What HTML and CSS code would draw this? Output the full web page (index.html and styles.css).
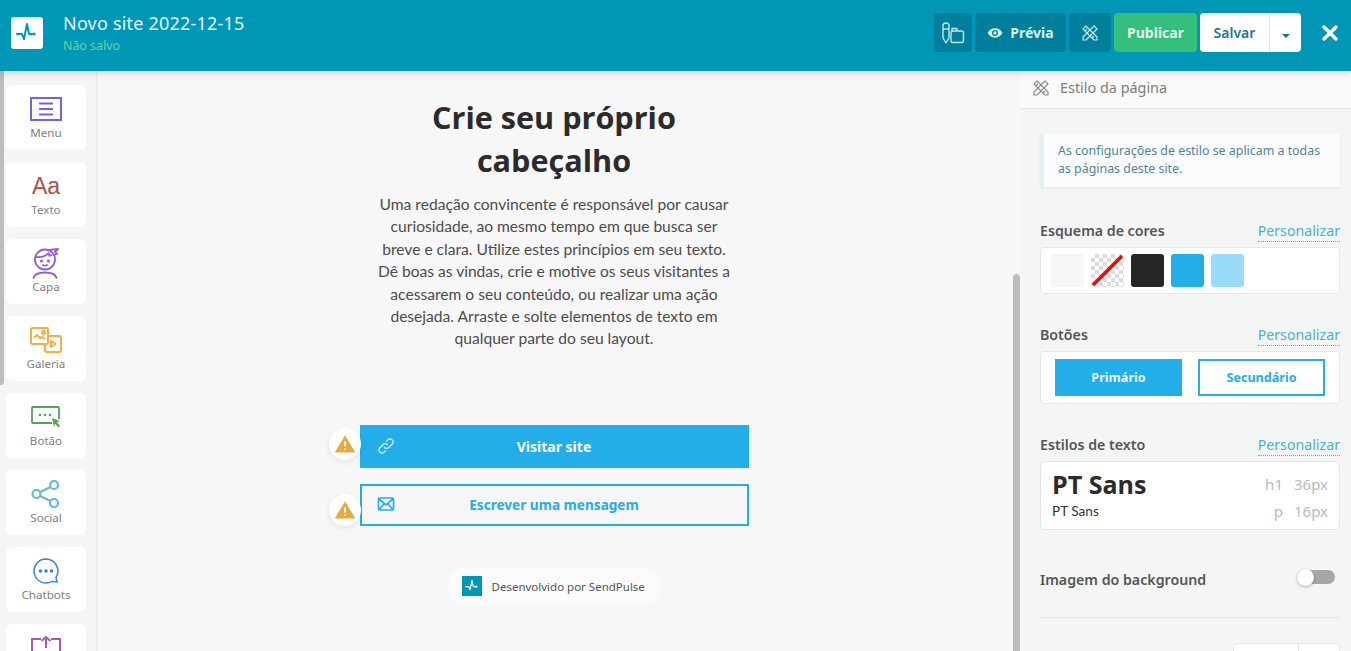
FILE: index.html
```html
<!DOCTYPE html>
<html lang="pt">
<head>
    <meta charset="UTF-8">
    <meta name="viewport" content="width=device-width, initial-scale=1.0">
    <title>Novo site 2022-12-15</title>
    <link rel="stylesheet" href="styles.css">
</head>
<body>

    <header class="topbar">
        <div class="logo">
            <svg width="22" height="22" viewBox="0 0 22 22" fill="none" stroke="#0096b6" stroke-width="2" stroke-linecap="round" stroke-linejoin="round"><path d="M1 12h5l2 5 3-15 2 10h3"/><circle cx="18" cy="12" r="1.6" fill="#0096b6" stroke="none"/></svg>
        </div>
        <div class="site-info">
            <div class="site-name">Novo site 2022-12-15</div>
            <div class="site-state">Não salvo</div>
        </div>
        <div class="actions">
            <button class="btn btn-dark btn-icon">
                <svg width="24" height="24" viewBox="0 0 24 24" fill="none" stroke="#bfe6ef" stroke-width="1.4" stroke-linejoin="round"><path d="M2 5a3 3 0 0 1 6 0v12l-3 5-3-5z"/><path d="M2 8h6"/><rect x="10" y="10" width="12.500" height="11.500" rx="2"/><path d="M11 10V7.500h5V10"/></svg>
            </button>
            <button class="btn btn-dark btn-preview">
                <svg width="16" height="16" viewBox="0 0 24 24" fill="#d9f2f7"><path d="M12 5C7 5 2.700 8.100 1 12c1.700 3.900 6 7 11 7s9.300-3.100 11-7c-1.700-3.900-6-7-11-7zm0 11.500a4.500 4.500 0 1 1 0-9 4.500 4.500 0 0 1 0 9zm0-7a2.500 2.500 0 1 0 0 5 2.500 2.500 0 0 0 0-5z"/></svg>
                Prévia
            </button>
            <button class="btn btn-dark btn-tools">
                <svg width="18" height="18" viewBox="0 0 18 18" fill="none" stroke="#bfe6ef" stroke-width="1.200" stroke-linejoin="round"><path d="M2 5l3-3 11 11v3h-3z"/><path d="M16 5l-3-3L2 13v3h3z"/><path d="M4 7l2-2M11 14l2-2"/></svg>
            </button>
            <button class="btn btn-publish">Publicar</button>
            <div class="save-group">
                <button class="save-main">Salvar</button>
                <button class="save-more"><span class="caret"></span></button>
            </div>
            <button class="close-btn">
                <svg width="18" height="18" viewBox="0 0 18 18" stroke="#fff" stroke-width="3.400" stroke-linecap="round"><path d="M3 3l12 12M15 3L3 15"/></svg>
            </button>
        </div>
    </header>

    <div class="workspace">
        <aside class="blocks">
            <div class="scroll-thumb-left"></div>
            <div class="block">
                <div class="block-icon"><svg width="32" height="24" viewBox="0 0 32 24" fill="none" stroke="#6a67e0" stroke-width="2"><rect x="1" y="1" width="30" height="22"/><path d="M9 6.500h14M9 12h14M9 17.500h14"/></svg></div>
                <span>Menu</span>
            </div>
            <div class="block">
                <div class="block-icon"><span class="aa">Aa</span></div>
                <span>Texto</span>
            </div>
            <div class="block">
                <div class="block-icon"><svg width="28" height="32" viewBox="0 0 28 32" fill="none" stroke="#9560c4" stroke-width="1.800" stroke-linecap="round" stroke-linejoin="round"><circle cx="13" cy="12.500" r="10"/><path d="M3.500 10c5 .5 10-.5 13-4l1 3 2-1"/><path d="M17 3l9-1-3 3 2 2-3 1"/><circle cx="9.500" cy="14" r=".7" fill="#9560c4"/><circle cx="16.500" cy="14" r=".7" fill="#9560c4"/><path d="M11 18c1.200.800 2.800.800 4 0"/><path d="M1.500 31c.8-3.500 5.500-5.500 11.500-5.500s10.700 2 11.500 5.500"/></svg></div>
                <span>Capa</span>
            </div>
            <div class="block">
                <div class="block-icon"><svg width="32" height="26" viewBox="0 0 32 26" fill="none" stroke="#f3ad42" stroke-width="2" stroke-linejoin="round"><rect x="1" y="1" width="17" height="16" rx="1.500"/><path d="M4 11l3-3 3 3 2-1 3 2"/><circle cx="13.500" cy="5.500" r="1.500"/><path d="M18 9h11.500a1.500 1.500 0 0 1 1.500 1.500v13a1.500 1.500 0 0 1-1.500 1.500h-13a1.500 1.500 0 0 1-1.500-1.500V17"/><path d="M21 14l4.500 3-4.500 3z"/></svg></div>
                <span>Galeria</span>
            </div>
            <div class="block">
                <div class="block-icon"><svg width="30" height="22" viewBox="0 0 30 22" fill="none" stroke="#5a9f5f" stroke-width="1.800"><path d="M21 17H2a1 1 0 0 1-1-1V2a1 1 0 0 1 1-1h25a1 1 0 0 1 1 1v11"/><g fill="#5a9f5f" stroke="none"><circle cx="9" cy="9" r="1.300"/><circle cx="14" cy="9" r="1.300"/><circle cx="19" cy="9" r="1.300"/><path d="M21 12l8 3-3.200 1.300L29 20l-1.500 1.500-3.300-3.800L23 21z"/></g></svg></div>
                <span>Botão</span>
            </div>
            <div class="block">
                <div class="block-icon"><svg width="30" height="28" viewBox="0 0 30 28" fill="none" stroke="#68b9d3" stroke-width="2.200"><circle cx="5.500" cy="14" r="4"/><circle cx="23" cy="5" r="4"/><circle cx="23" cy="23" r="4"/><path d="M9 12l10.500-5M9 16l10.500 5"/></svg></div>
                <span>Social</span>
            </div>
            <div class="block">
                <div class="block-icon"><svg width="26" height="26" viewBox="0 0 26 26" fill="none" stroke="#3c80d8" stroke-width="1.500"><path d="M13 1a12 12 0 1 0 6 22.400l5 .6-1-4.600A12 12 0 0 0 13 1z"/><g fill="#3c80d8" stroke="none"><circle cx="7.500" cy="13" r="1.800"/><circle cx="13" cy="13" r="1.800"/><circle cx="18.500" cy="13" r="1.800"/></g></svg></div>
                <span>Chatbots</span>
            </div>
            <div class="block">
                <div class="block-icon"><svg width="30" height="24" viewBox="0 0 30 24" fill="none" stroke="#a959ac" stroke-width="2"><path d="M10 3H1v20h28V3h-9"/><path d="M15 12V1M10.500 5L15 1l4.500 4"/></svg></div>
            </div>
        </aside>

        <main class="canvas">
            <div class="scroll-thumb-right"></div>
            <h1>Crie seu próprio<br>cabeçalho</h1>
            <p class="lead">Uma redação convincente é responsável por causar<br>curiosidade, ao mesmo tempo em que busca ser<br>breve e clara. Utilize estes princípios em seu texto.<br>Dê boas as vindas, crie e motive os seus visitantes a<br>acessarem o seu conteúdo, ou realizar uma ação<br>desejada. Arraste e solte elementos de texto em<br>qualquer parte do seu layout.</p>

            <div class="cta cta-solid">
                <span class="warn"><svg width="20" height="18" viewBox="0 0 20 18"><path d="M10 1L19.500 17H.5z" fill="#e4ab45" stroke="#e4ab45" stroke-linejoin="round"/><path d="M10 6.500v5M10 13.500v1.500" stroke="#fff" stroke-width="1.800"/></svg></span>
                <svg class="cta-icon" width="18" height="18" viewBox="0 0 18 18" fill="none" stroke="#d4f0fb" stroke-width="1.300" stroke-linecap="round"><path d="M7.500 10.500a3 3 0 0 0 4.300 0l3.300-3.300a3 3 0 0 0-4.300-4.300L9.500 4.200"/><path d="M10.500 7.500a3 3 0 0 0-4.300 0l-3.300 3.300a3 3 0 0 0 4.300 4.300l1.300-1.300"/></svg>
                Visitar site
            </div>
            <div class="cta cta-outline">
                <span class="warn"><svg width="20" height="18" viewBox="0 0 20 18"><path d="M10 1L19.500 17H.5z" fill="#e4ab45" stroke="#e4ab45" stroke-linejoin="round"/><path d="M10 6.500v5M10 13.500v1.500" stroke="#fff" stroke-width="1.800"/></svg></span>
                <svg class="cta-icon" width="18" height="16" viewBox="0 0 18 16" fill="none" stroke="#23ade9" stroke-width="1.700"><rect x="1.500" y="2" width="15" height="12" rx="1"/><path d="M2 3l7 6 7-6M2 13.500l5-5.500M16 13.500L11 8"/></svg>
                Escrever uma mensagem
            </div>

            <div class="powered">
                <span class="powered-logo">
                    <svg width="14" height="14" viewBox="0 0 22 22" fill="none" stroke="#fff" stroke-width="1.800" stroke-linecap="round" stroke-linejoin="round"><path d="M1 12h5l2 5 3-15 2 10h3"/><circle cx="18" cy="12" r="1.600" fill="#fff" stroke="none"/></svg>
                </span>
                Desenvolvido por SendPulse
            </div>
        </main>

        <aside class="panel">
            <div class="panel-title">
                <svg width="18" height="18" viewBox="0 0 18 18" fill="none" stroke="#8a8f90" stroke-width="1.200" stroke-linejoin="round"><path d="M2 5l3-3 11 11v3h-3z"/><path d="M16 5l-3-3L2 13v3h3z"/><path d="M4 7l2-2M11 14l2-2"/></svg>
                Estilo da página
            </div>
            <div class="panel-body">
                <div class="note">As configurações de estilo se aplicam a todas as páginas deste site.</div>

                <div class="section-head section-first">
                    <span class="section-label">Esquema de cores</span>
                    <a class="customize">Personalizar</a>
                </div>
                <div class="box swatches">
                    <span class="swatch sw-light"></span>
                    <span class="swatch sw-none"><svg width="33" height="33" viewBox="0 0 33 33"><path d="M2 31L31 2" stroke="#f00" stroke-width="3.500"/></svg></span>
                    <span class="swatch sw-black"></span>
                    <span class="swatch sw-blue"></span>
                    <span class="swatch sw-sky"></span>
                </div>

                <div class="section-head section-buttons">
                    <span class="section-label">Botões</span>
                    <a class="customize">Personalizar</a>
                </div>
                <div class="box sample-buttons">
                    <span class="sample sample-solid">Primário</span>
                    <span class="sample sample-outline">Secundário</span>
                </div>

                <div class="section-head section-type">
                    <span class="section-label">Estilos de texto</span>
                    <a class="customize">Personalizar</a>
                </div>
                <div class="box type-box">
                    <div class="type-row">
                        <span class="type-h1">PT Sans</span>
                        <span class="type-meta"><span>h1</span><span>36px</span></span>
                    </div>
                    <div class="type-row">
                        <span class="type-p">PT Sans</span>
                        <span class="type-meta"><span>p</span><span>16px</span></span>
                    </div>
                </div>

                <div class="toggle-row">
                    <span class="section-label">Imagem do background</span>
                    <span class="toggle"><span class="knob"></span></span>
                </div>
                <hr class="rule">
                <div class="segmented"><span></span><span></span></div>
            </div>
        </aside>
    </div>

</body>
</html>
```

FILE: styles.css
```css
* {
    box-sizing: border-box;
}
html, body {
    height: 100%;
}
body {
    margin: 0;
    overflow: hidden;
    font-family: "Noto Sans", sans-serif;
    background-color: #f7f7f7;
    color: #333;
}
button {
    font-family: inherit;
    border: none;
    cursor: pointer;
}

/* top bar */
.topbar {
    position: relative;
    z-index: 2;
    display: flex;
    align-items: center;
    height: 71px;
    padding: 0 11px;
    background-color: #0096b6;
    box-shadow: 0 2px 8px rgba(0, 0, 0, 0.15);
}
.logo {
    display: flex;
    align-items: center;
    justify-content: center;
    width: 32px;
    height: 32px;
    margin-top: -5px;
    background: #fff;
    border-radius: 3px;
}
.site-info {
    margin-left: 20px;
    margin-top: -7px;
}
.site-name {
    font-size: 18px;
    line-height: 24px;
    letter-spacing: 0.2px;
    color: #e8f8fb;
}
.site-state {
    margin-top: 3px;
    font-size: 12.4px;
    line-height: 16px;
    color: #66d3a5;
}
.actions {
    display: flex;
    align-items: center;
    gap: 3px;
    margin-left: auto;
    margin-top: -6px;
}
.btn {
    display: flex;
    align-items: center;
    justify-content: center;
    height: 39px;
    border-radius: 4px;
    font-size: 14px;
    font-weight: 700;
    color: #d9f2f7;
}
.btn-dark {
    background-color: #007f9c;
}
.btn-icon {
    width: 38px;
    padding: 0;
}
.btn-preview {
    gap: 7px;
    width: 91px;
}
.btn-tools {
    width: 42px;
}
.btn-publish {
    width: 83px;
    background-color: #35bf7c;
    color: #e4f8ee;
}
.save-group {
    display: flex;
    width: 101px;
    height: 39px;
    background: #fff;
    border-radius: 4px;
}
.save-main {
    width: 69px;
    background: none;
    font-size: 14px;
    font-weight: 600;
    color: #1f7690;
}
.save-more {
    flex: 1;
    background: none;
    border-left: 1px solid #e6e6e6;
}
.caret {
    display: inline-block;
    margin-top: 6px;
    border-top: 4px solid #1f7690;
    border-left: 4px solid transparent;
    border-right: 4px solid transparent;
}
.close-btn {
    display: flex;
    width: 18px;
    height: 18px;
    margin-left: 17px;
    margin-right: 1px;
    padding: 0;
    background: none;
}

/* layout */
.workspace {
    display: flex;
    height: 580px;
}

/* block list */
.blocks {
    position: relative;
    display: flex;
    flex-direction: column;
    flex-shrink: 0;
    gap: 12px;
    width: 98px;
    height: 580px;
    padding: 14px 10px 0 6px;
    overflow: hidden;
    background-color: #f4f5f5;
    border-right: 2px solid #ececec;
}
.scroll-thumb-left {
    position: absolute;
    top: 0;
    left: 0;
    width: 4px;
    height: 314px;
    background: #bdbdbd;
    border-radius: 0 0 3px 0;
}
.block {
    display: flex;
    flex-direction: column;
    flex-shrink: 0;
    align-items: center;
    height: 65px;
    padding-top: 7px;
    background: #fff;
    border-radius: 6px;
    font-size: 11.6px;
    line-height: 14px;
    color: #808080;
}
.block-icon {
    display: flex;
    align-items: center;
    justify-content: center;
    height: 34px;
}
.aa {
    font-family: "Liberation Sans", sans-serif;
    font-size: 23px;
    line-height: 28px;
    color: #b05148;
}

/* page preview */
.canvas {
    position: relative;
    display: flex;
    flex: 1;
    flex-direction: column;
    align-items: center;
    padding: 25px 10px 0 0;
    background-color: #f7f7f7;
}
.scroll-thumb-right {
    position: absolute;
    top: 203px;
    right: 0;
    width: 7px;
    height: 377px;
    background: #bdbdbd;
    border-radius: 4px 4px 0 0;
}
.canvas h1 {
    margin: 0;
    font-family: "Open Sans", sans-serif;
    font-size: 30.6px;
    line-height: 43px;
    text-align: center;
    color: #2b2b2b;
}
.lead {
    width: 389px;
    margin: 11px 0 0;
    font-family: "Lato", sans-serif;
    font-size: 15.6px;
    line-height: 22.4px;
    text-align: center;
    color: #4c4c4c;
}
.cta {
    position: relative;
    display: flex;
    align-items: center;
    justify-content: center;
    width: 389px;
    font-size: 14px;
    font-weight: 700;
}
.cta-solid {
    height: 43px;
    margin-top: 75px;
    background-color: #23ade9;
    color: #fff;
}
.cta-outline {
    height: 42px;
    margin-top: 16px;
    border: 2px solid #23ade9;
    font-size: 13.6px;
    color: #23ade9;
}
.cta-icon {
    position: absolute;
    top: 12px;
    left: 17px;
}
.cta-outline .cta-icon {
    top: 10px;
    left: 15px;
}
.warn {
    position: absolute;
    top: 3px;
    left: -31px;
    display: flex;
    align-items: center;
    justify-content: center;
    width: 32px;
    height: 32px;
    background: #fff;
    border-radius: 50%;
    box-shadow: 0 2px 6px rgba(0, 0, 0, 0.08);
}
.cta-outline .warn {
    top: 8px;
    left: -33px;
}
.powered {
    display: flex;
    align-items: center;
    gap: 10px;
    width: 213px;
    height: 39px;
    margin-top: 41px;
    padding-left: 14px;
    background: #fbfbfb;
    border-radius: 20px;
    font-size: 11.5px;
    color: #555;
}
.powered-logo {
    display: flex;
    align-items: center;
    justify-content: center;
    width: 20px;
    height: 20px;
    background-color: #0096b6;
}

/* settings panel */
.panel {
    flex-shrink: 0;
    width: 331px;
    height: 580px;
    overflow: hidden;
    background-color: #f4f6f6;
}
.panel-title {
    display: flex;
    align-items: center;
    gap: 10px;
    height: 38px;
    padding: 0 0 4px 12px;
    background: #fafafa;
    border-bottom: 1px solid #e2e8e8;
    font-size: 14.4px;
    color: #7d7d7d;
}
.panel-body {
    padding: 25px 11px 0 20px;
}
.note {
    height: 53px;
    padding: 8px 8px 0 14px;
    background: #fafcfd;
    border-left: 4px solid #e3eff4;
    box-shadow: 0 1px 2px rgba(0, 0, 0, 0.06);
    font-size: 12.4px;
    line-height: 18px;
    color: #55839b;
}
.section-head {
    display: flex;
    align-items: flex-end;
    justify-content: space-between;
    height: 24px;
    margin-bottom: 5px;
}
.section-first {
    margin-top: 31px;
}
.section-buttons {
    margin-top: 28px;
}
.section-type {
    margin-top: 28px;
}
.section-label {
    font-size: 14.2px;
    font-weight: 600;
    color: #555;
}
.section-head .section-label {
    margin-bottom: 2px;
}
.customize {
    font-size: 14.2px;
    line-height: 20px;
    color: #4eb1c6;
    border-bottom: 1px dotted #4eb1c6;
}
.box {
    background: #fff;
    border: 1px solid #dfe9e9;
    border-radius: 4px;
}
.swatches {
    display: flex;
    gap: 7px;
    height: 47px;
    padding: 6px 10px;
}
.swatch {
    width: 33px;
    height: 33px;
    border-radius: 3px;
}
.sw-light {
    background: #f6f6f6;
}
.sw-none {
    background: repeating-conic-gradient(#dcdcdc 0 25%, #fff 0 50%) 0 0 / 8px 8px;
}
.sw-black {
    background: #262626;
}
.sw-blue {
    background: #23ade9;
}
.sw-sky {
    background: #9adcf7;
}
.sample-buttons {
    display: flex;
    gap: 16px;
    height: 53px;
    padding: 7px 14px;
}
.sample {
    display: flex;
    align-items: center;
    justify-content: center;
    width: 127px;
    font-size: 12.6px;
    font-weight: 700;
}
.sample-solid {
    background: #23ade9;
    color: #e7f7fe;
}
.sample-outline {
    border: 2px solid #23ade9;
    color: #23ade9;
}
.type-box {
    height: 69px;
    padding: 6px 11px;
}
.type-row {
    display: flex;
    align-items: center;
    justify-content: space-between;
}
.type-h1 {
    font-family: "Open Sans", sans-serif;
    font-size: 25px;
    font-weight: 700;
    line-height: 32px;
    color: #2b2b2b;
}
.type-p {
    font-family: "Lato", sans-serif;
    font-size: 13.6px;
    line-height: 22px;
    color: #333;
}
.type-meta {
    display: flex;
    gap: 11px;
    font-size: 15px;
    color: #b4bcc4;
}
.toggle-row {
    display: flex;
    align-items: center;
    justify-content: space-between;
    height: 24px;
    margin-top: 37px;
    padding-right: 4px;
}
.toggle {
    position: relative;
    width: 38px;
    height: 14px;
    margin-top: -4px;
    margin-right: 1px;
    background: #a6a6a6;
    border-radius: 7px;
}
.knob {
    position: absolute;
    top: -1px;
    left: 0;
    width: 17px;
    height: 17px;
    background: #fff;
    border-radius: 50%;
    box-shadow: 0 1px 3px rgba(0, 0, 0, 0.3);
}
.rule {
    margin: 26px 0 0;
    border: none;
    border-top: 1px solid #dfe6e6;
}
.segmented {
    display: flex;
    width: 107px;
    height: 30px;
    margin-top: 25px;
    margin-left: auto;
    background: #fff;
    border: 1px solid #dfe9e9;
    border-radius: 4px;
}
.segmented span:first-child {
    width: 65px;
    border-right: 1px solid #dfe9e9;
}
```
